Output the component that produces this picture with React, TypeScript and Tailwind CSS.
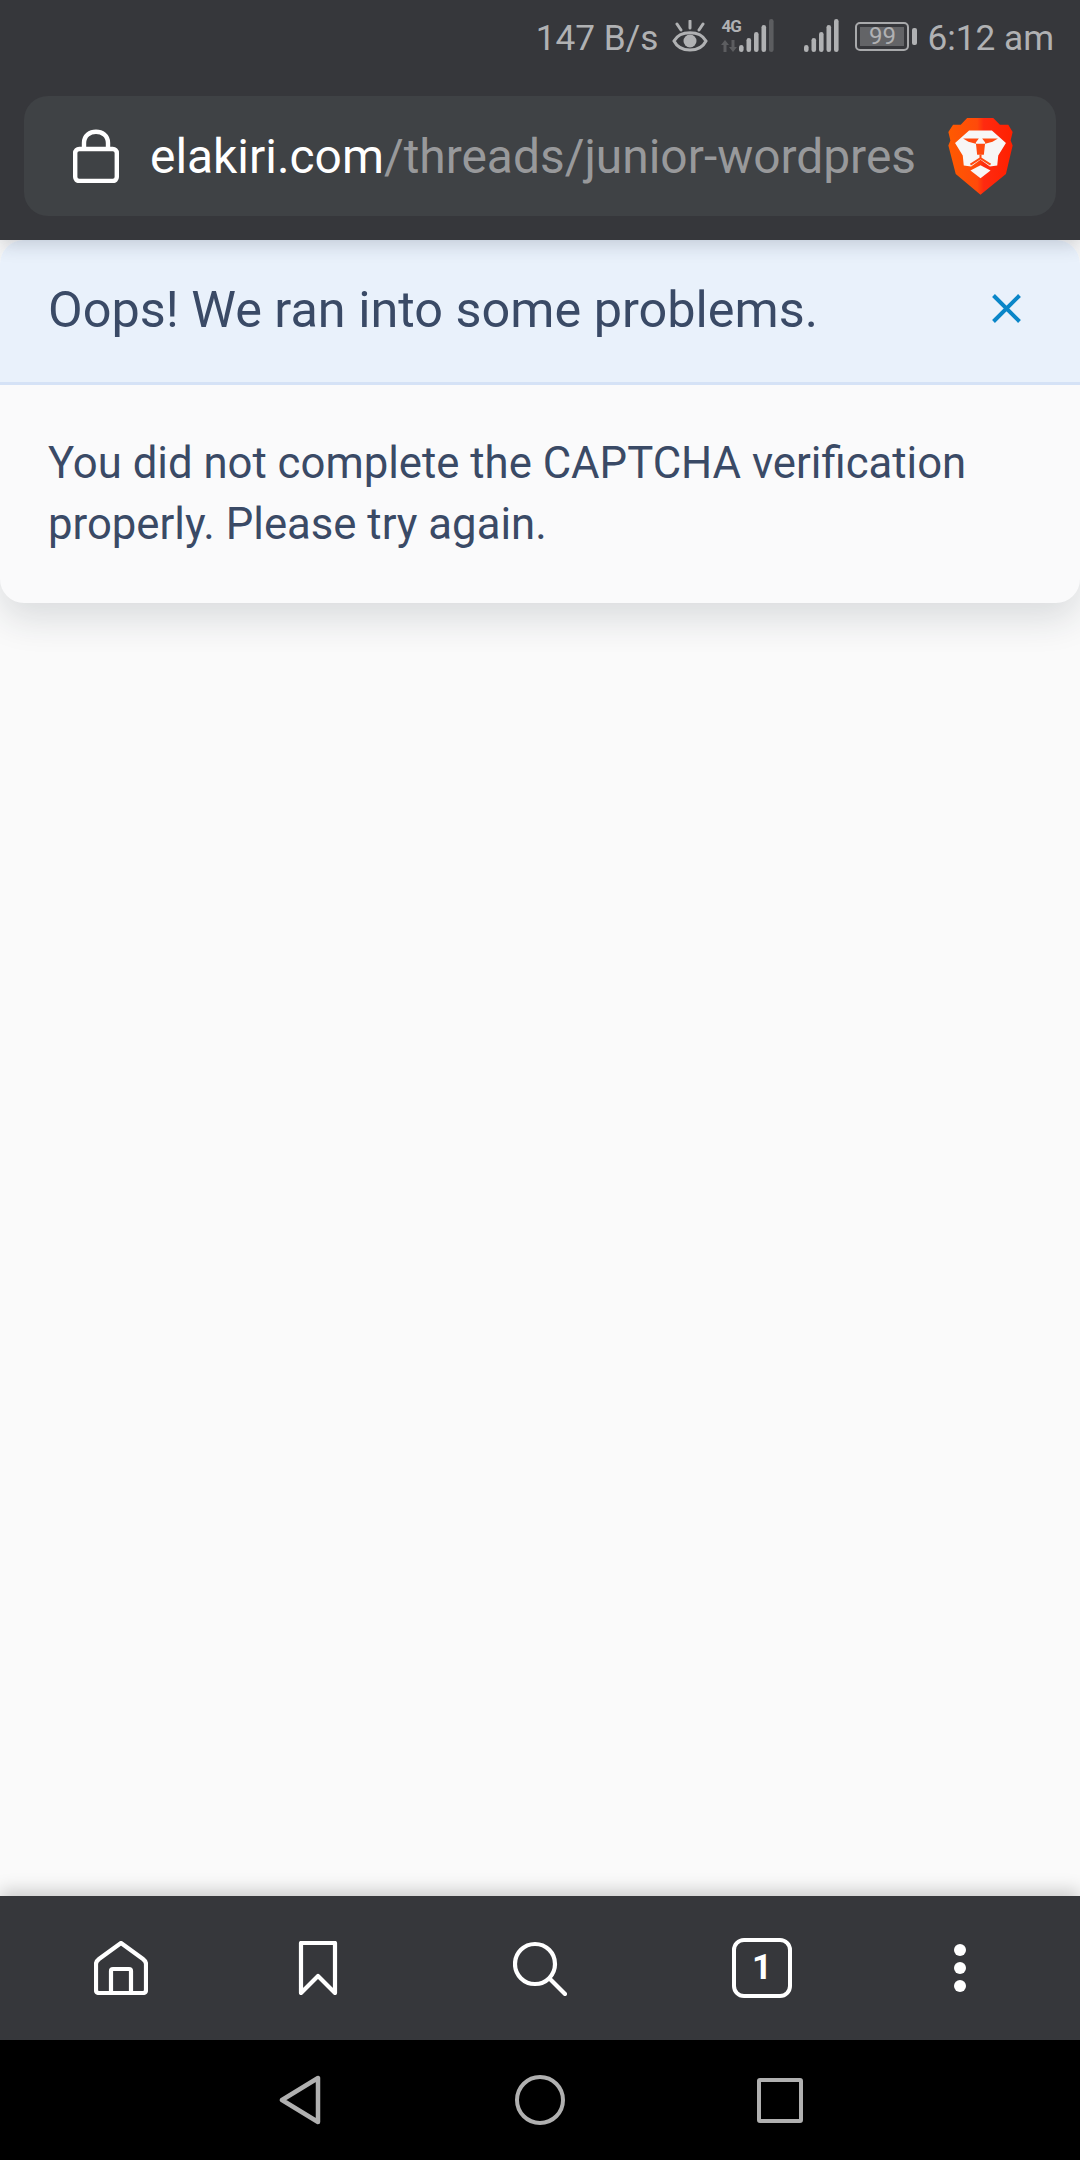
const roboto = "font-['Roboto',sans-serif]";

function Bars({ dimLast, className }: { dimLast?: boolean; className: string }) {
    return (
        <svg viewBox="0 0 35 34" className={className} fill="currentColor">
            <rect x="0" y="26" width="4.6" height="7" rx="2.3" />
            <rect x="7.5" y="19" width="4.6" height="14" rx="2.3" />
            <rect x="15" y="13" width="4.6" height="20" rx="2.3" />
            <rect x="22.5" y="6" width="4.6" height="27" rx="2.3" />
            <rect x="30" y="0" width="4.6" height="33" rx="2.3" fill={dimLast ? '#5c5d60' : 'currentColor'} />
        </svg>
    );
}

function StatusBar() {
    return (
        <div className={`h-[72px] flex items-center justify-end pr-[26px] text-[#b0b1b3] text-[35.2px] ${roboto}`}>
            <span className="mt-[4px]">147 B/s</span>
            <svg viewBox="0 0 36 33" className="w-[36px] h-[33px] ml-[14px]" fill="none" stroke="currentColor" strokeWidth="3">
                <path d="M2 21 C8 10 28 10 34 21 C28 33 8 33 2 21 Z" />
                <circle cx="18" cy="21" r="6.5" fill="currentColor" stroke="none" />
                <path d="M18 1 V8 M5 4 L9 10 M31 4 L27 10" strokeLinecap="round" />
            </svg>
            <div className="relative w-[53px] h-[34px] ml-[13px]">
                <span className="absolute left-0 top-[-5px] text-[17px] font-bold leading-[24px] tracking-[-1px]">4G</span>
                <svg viewBox="0 0 16 12" className="absolute left-0 top-[21px] w-[16px] h-[12px]" fill="#5c5d60">
                    <path d="M4 0 L8 5 H5.5 V12 H2.5 V5 H0 Z" />
                    <path d="M12 12 L8 7 H10.5 V0 H13.5 V7 H16 Z" />
                </svg>
                <Bars dimLast className="absolute left-[18px] top-0 w-[35px] h-[34px]" />
            </div>
            <Bars className="w-[35px] h-[34px] ml-[30px]" />
            <div className="w-[54px] h-[29px] ml-[16px] border-2 border-[#a8a9ab] rounded-[5px] p-[3px]">
                <div className="h-full bg-[#636467] flex items-center justify-center text-[24px] leading-none">99</div>
            </div>
            <div className="w-[5px] h-[17px] ml-[3px] bg-[#b0b1b3] rounded-[2px]" />
            <span className="ml-[10px] mt-[4px]">6:12 am</span>
        </div>
    );
}

function Lion() {
    return (
        <svg viewBox="205 83 194 230" className="w-[65px] h-[77px] shrink-0">
            <defs>
                <linearGradient id="shield" x1="0" x2="1" y1="0" y2="0">
                    <stop offset="0" stopColor="#ff5a00" />
                    <stop offset="0.45" stopColor="#ff4a0a" />
                    <stop offset="0.55" stopColor="#ff2a10" />
                    <stop offset="1" stopColor="#ff2000" />
                </linearGradient>
            </defs>
            <path fill="url(#shield)" d="M262 83 H340 L360 103 H385 L398 125 L392 150 L398 165 L378 250 L302 312 L228 250 L206 165 L212 150 L206 125 L220 103 H243 Z" />
            <path fill="#f7f6f6" d="M268 120 H336 L378 158 L355 195 L352 225 L330 228 L302 208 L274 228 L252 225 L249 195 L226 158 Z" />
            <path fill="#ff4a10" d="M250 144 H297 L288 156 L292 193 H312 L316 156 L307 144 H354 L338 154 L316 160 H288 L266 154 Z" />
            <path fill="none" stroke="#ff4a10" strokeWidth="6" d="M272 222 L302 203 L332 222 M302 193 V205" />
            <path fill="#f7f6f6" d="M272 240 L302 224 L332 240 L302 263 Z" />
        </svg>
    );
}

function AddressBar() {
    return (
        <div className="mx-[24px] h-[120px] mt-[24px] rounded-[24px] bg-[#3f4245] flex items-center pl-[49px] pr-[43px]">
            <svg viewBox="0 0 46 54" className="w-[46px] h-[54px] shrink-0" fill="none" stroke="white" strokeWidth="4.4">
                <path d="M11 20 V14 C11 -1 35 -1 35 14 V20" />
                <rect x="2.2" y="20" width="41.6" height="32" rx="4" />
            </svg>
            <div className={`ml-[31px] mt-[3px] whitespace-nowrap text-[47.9px] text-white ${roboto}`}>
                elakiri.com<span className="text-[#98999b]">/threads/junior-wordpres</span>
            </div>
            <div className="ml-auto">
                <Lion />
            </div>
        </div>
    );
}

function ErrorCard() {
    return (
        <div className={`rounded-[24px] bg-[#fafafb] shadow-[0_16px_36px_rgba(30,41,59,0.14)] overflow-hidden text-[#3a4a66] ${roboto}`}>
            <div className="h-[145px] pb-[2px] bg-[#e9f1fb] border-b-[3px] border-[#d5e2f6] flex items-center justify-between pl-[48px] pr-[59px]">
                <span className="text-[50.4px]">Oops! We ran into some problems.</span>
                <svg viewBox="0 0 29 29" className="w-[29px] h-[29px] -mt-[4px]" fill="none" stroke="#0a86c8" strokeWidth="4">
                    <path d="M1.5 1.5 L27.5 27.5 M27.5 1.5 L1.5 27.5" />
                </svg>
            </div>
            <div className="px-[48px] pt-[48px] pb-[48px] text-[43.7px] leading-[61px]">
                You did not complete the CAPTCHA verification properly. Please try again.
            </div>
        </div>
    );
}

function BottomNav() {
    return (
        <div className="h-[144px] bg-[#36373b] flex items-center pl-[94px] text-white">
            <svg viewBox="0 0 54 54" className="w-[54px] h-[54px]" fill="none" stroke="currentColor" strokeWidth="4.2" strokeLinejoin="round">
                <path d="M27 2 L49 18 C51 19.5 52 21 52 23 V49 C52 51 51 52 49 52 H5 C3 52 2 51 2 49 V23 C2 21 3 19.5 5 18 Z" />
                <path d="M17 52 V30 C17 28.5 18 28 19 28 H35 C36 28 37 28.5 37 30 V52" />
            </svg>
            <svg viewBox="0 0 40 54" className="w-[40px] h-[54px] ml-[150px]" fill="none" stroke="currentColor" strokeWidth="4.2" strokeLinejoin="round" strokeLinecap="round">
                <path d="M3 2 H37 V52 L20 35 L3 52 Z" />
            </svg>
            <svg viewBox="0 0 54 55" className="w-[54px] h-[55px] ml-[175px]" fill="none" stroke="currentColor" strokeWidth="4.2" strokeLinecap="round">
                <circle cx="22" cy="23" r="20" />
                <path d="M37 38 L52 53" />
            </svg>
            <div className={`w-[60px] h-[60px] ml-[165px] border-[4px] border-white rounded-[12px] flex items-center justify-center text-[35px] font-bold ${roboto}`}>1</div>
            <div className="w-[12px] ml-[162px] flex flex-col items-center gap-[6px]">
                <div className="w-[12px] h-[12px] rounded-full bg-white" />
                <div className="w-[12px] h-[12px] rounded-full bg-white" />
                <div className="w-[12px] h-[12px] rounded-full bg-white" />
            </div>
        </div>
    );
}

function SystemNav() {
    return (
        <div className="h-[120px] bg-black flex items-center pl-[279px] text-[#b0b0b0]">
            <svg viewBox="0 0 42 50" className="w-[42px] h-[50px]" fill="none" stroke="currentColor" strokeWidth="4.5" strokeLinejoin="round">
                <path d="M39 3 V47 L3 25 Z" />
            </svg>
            <div className="w-[50px] h-[50px] ml-[194px] rounded-full border-[4.5px] border-[#b0b0b0]" />
            <div className="w-[46px] h-[45px] ml-[192px] rounded-[3px] border-[4.5px] border-[#b0b0b0]" />
        </div>
    );
}

export default function App() {
    return (
        <div className="w-[1080px] h-[2160px] flex flex-col bg-[#fafafa] overflow-hidden">
            <div className="h-[240px] shrink-0 bg-[#36373b] relative z-10 shadow-[0_4px_18px_rgba(30,41,59,0.2)]">
                <StatusBar />
                <AddressBar />
            </div>
            <div className="flex-1">
                <ErrorCard />
            </div>
            <div className="shrink-0 relative shadow-[0_-6px_16px_rgba(0,0,0,0.18)]">
                <BottomNav />
            </div>
            <SystemNav />
        </div>
    );
}
